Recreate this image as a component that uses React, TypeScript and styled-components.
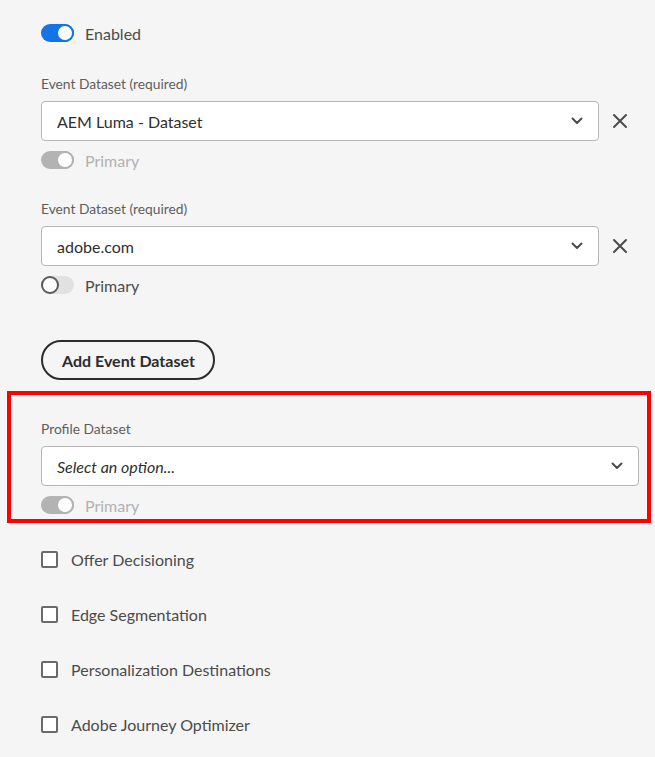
import React from 'react';
import styled, { createGlobalStyle } from 'styled-components';

const GlobalStyle = createGlobalStyle`
  html, body {
    margin: 0;
    padding: 0;
    background: #f5f5f5;
  }
  body {
    font-family: Lato, "Open Sans", sans-serif;
    color: #4b4b4b;
  }
`;

const Page = styled.div`
  width: 655px;
  min-height: 757px;
  padding-top: 17px;
  box-sizing: border-box;
`;

const Section = styled.div`
  padding-left: 41px;
  padding-right: 16px;
`;

const SwitchRow = styled.div<{ $height?: number }>`
  display: flex;
  align-items: center;
  gap: 11px;
  height: ${({ $height }) => $height || 24}px;
`;

const Track = styled.span<{ $on?: boolean; $disabled?: boolean }>`
  position: relative;
  flex: none;
  width: 33px;
  height: 18px;
  border-radius: 9px;
  box-sizing: border-box;
  background: ${({ $on, $disabled }) =>
    $disabled ? '#b3b3b3' : $on ? '#1473e6' : '#e1e1e1'};

  &::after {
    content: '';
    position: absolute;
    top: 0;
    left: ${({ $on }) => ($on ? '15px' : '0')};
    width: 18px;
    height: 18px;
    border-radius: 50%;
    box-sizing: border-box;
    background: #fff;
    border: 2px solid
      ${({ $on, $disabled }) =>
        $disabled ? '#b3b3b3' : $on ? '#1473e6' : '#5a5a5a'};
  }
`;

const SwitchText = styled.span<{ $disabled?: boolean }>`
  font-size: 16px;
  color: ${({ $disabled }) => ($disabled ? '#b1b1b1' : '#4b4b4b')};
`;

const FieldLabel = styled.div<{ $top: number }>`
  margin-top: ${({ $top }) => $top}px;
  font-size: 13.8px;
  line-height: 18px;
  color: #5d5d5d;
`;

const SelectRow = styled.div`
  display: flex;
  align-items: center;
  margin-top: 8px;
`;

const SelectBox = styled.div<{ $width: number }>`
  display: flex;
  align-items: center;
  justify-content: space-between;
  width: ${({ $width }) => $width}px;
  height: 40px;
  box-sizing: border-box;
  padding: 0 15px 0 15px;
  background: #fff;
  border: 1px solid #b6b6b6;
  border-radius: 4px;
`;

const SelectValue = styled.span<{ $placeholder?: boolean }>`
  font-size: 16px;
  color: #2f2f2f;
  font-style: ${({ $placeholder }) => ($placeholder ? 'italic' : 'normal')};
`;

const ClearButton = styled.span`
  display: flex;
  align-items: center;
  justify-content: center;
  width: 16px;
  height: 16px;
  margin-left: 13px;
`;

const PrimaryWrap = styled.div`
  margin-top: 7px;
`;

const AddButton = styled.button`
  display: flex;
  align-items: center;
  margin-top: 43px;
  height: 40px;
  padding: 0 18px 0 19px;
  background: transparent;
  border: 2px solid #2c2c2c;
  border-radius: 20px;
  font-family: Lato, "Open Sans", sans-serif;
  font-size: 16px;
  font-weight: 700;
  color: #2c2c2c;
`;

const Highlight = styled.div`
  margin: 11px 4px 0 7px;
  padding: 25px 8px 2px 30px;
  border: 4px solid #f00;
`;

const CheckList = styled.div`
  display: flex;
  flex-direction: column;
  padding-top: 9px;
`;

const CheckRow = styled.label`
  display: flex;
  align-items: center;
  gap: 13px;
  height: 55px;
  font-size: 16px;
  color: #4b4b4b;
`;

const CheckBox = styled.span`
  flex: none;
  width: 17px;
  height: 17px;
  box-sizing: border-box;
  border: 2px solid #6a6a6a;
  border-radius: 2px;
  background: #fff;
`;

const Chevron = () => (
  <svg width="12" height="8" viewBox="0 0 12 8" fill="none">
    <path d="M1.5 1.5 L6 6 L10.5 1.5" stroke="#4b4b4b" strokeWidth="2" strokeLinecap="round" strokeLinejoin="round" />
  </svg>
);

const Cross = () => (
  <svg width="16" height="16" viewBox="0 0 16 16" fill="none">
    <path d="M2 2 L14 14 M14 2 L2 14" stroke="#4b4b4b" strokeWidth="2" strokeLinecap="round" />
  </svg>
);

interface DatasetFieldProps {
  label: string;
  value: string;
  placeholder?: boolean;
  width: number;
  removable?: boolean;
  top: number;
  primaryOn?: boolean;
  primaryDisabled?: boolean;
}

const DatasetField: React.FC<DatasetFieldProps> = ({
  label,
  value,
  placeholder,
  width,
  removable,
  top,
  primaryOn,
  primaryDisabled,
}) => (
  <>
    <FieldLabel $top={top}>{label}</FieldLabel>
    <SelectRow>
      <SelectBox $width={width}>
        <SelectValue $placeholder={placeholder}>{value}</SelectValue>
        <Chevron />
      </SelectBox>
      {removable && (
        <ClearButton>
          <Cross />
        </ClearButton>
      )}
    </SelectRow>
    <PrimaryWrap>
      <SwitchRow>
        <Track $on={primaryOn} $disabled={primaryDisabled} />
        <SwitchText $disabled={primaryDisabled}>Primary</SwitchText>
      </SwitchRow>
    </PrimaryWrap>
  </>
);

const services = [
  'Offer Decisioning',
  'Edge Segmentation',
  'Personalization Destinations',
  'Adobe Journey Optimizer',
];

export default function App() {
  return (
    <Page>
      <GlobalStyle />
      <Section>
        <SwitchRow $height={32}>
          <Track $on />
          <SwitchText>Enabled</SwitchText>
        </SwitchRow>

        <DatasetField
          label="Event Dataset (required)"
          value="AEM Luma - Dataset"
          width={558}
          removable
          top={26}
          primaryOn
          primaryDisabled
        />

        <DatasetField
          label="Event Dataset (required)"
          value="adobe.com"
          width={558}
          removable
          top={28}
        />

        <AddButton type="button">Add Event Dataset</AddButton>
      </Section>

      <Highlight>
        <FieldLabel $top={0}>Profile Dataset</FieldLabel>
        <SelectRow>
          <SelectBox $width={598}>
            <SelectValue $placeholder>Select an option...</SelectValue>
            <Chevron />
          </SelectBox>
        </SelectRow>
        <PrimaryWrap>
          <SwitchRow>
            <Track $on $disabled />
            <SwitchText $disabled>Primary</SwitchText>
          </SwitchRow>
        </PrimaryWrap>
      </Highlight>

      <Section>
        <CheckList>
          {services.map((s) => (
            <CheckRow key={s}>
              <CheckBox />
              {s}
            </CheckRow>
          ))}
        </CheckList>
      </Section>
    </Page>
  );
}
